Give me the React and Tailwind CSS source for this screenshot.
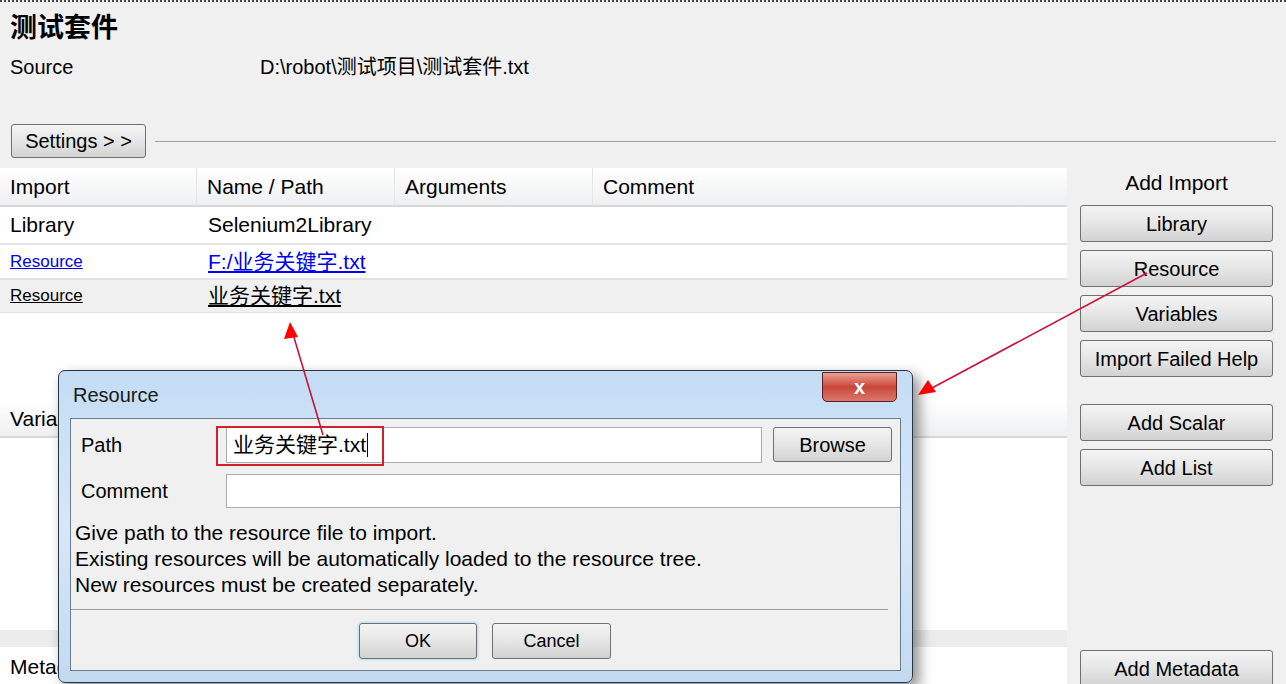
import React from 'react';

const font = { fontFamily: '"Liberation Sans", "Noto Sans CJK SC", sans-serif' };

const WinButton = ({ children, className = '' }) => (
  <button
    className={`flex items-center justify-center rounded-[3px] border border-[#707070] bg-gradient-to-b from-[#f4f4f4] via-[#e6e6e6] to-[#d2d2d2] text-black ${className}`}
  >
    {children}
  </button>
);

const GridHeader = ({ cols, h = 'h-[39px]' }) => (
  <div className={`flex ${h} border-b-2 border-[#d8d8d8] bg-gradient-to-b from-[#ffffff] to-[#eef0f2]`}>
    {cols.map((c, i) => (
      <div
        key={i}
        className={`flex items-center pl-[10px] text-[21px] ${i < cols.length - 1 ? 'border-r border-[#e6e6e6]' : ''}`}
        style={{ width: c.w }}
      >
        {c.label}
      </div>
    ))}
  </div>
);

const importCols = [
  { label: 'Import', w: 197 },
  { label: 'Name / Path', w: 198 },
  { label: 'Arguments', w: 198 },
  { label: 'Comment', w: 474 },
];

const rows = [
  { type: 'Library', name: 'Selenium2Library', link: false, h: 'h-[38px]', bg: 'bg-white', b: 'border-b-2' },
  { type: 'Resource', name: 'F:/业务关键字.txt', link: 'blue', h: 'h-[35px]', bg: 'bg-white', b: 'border-b-2' },
  { type: 'Resource', name: '业务关键字.txt', link: 'black', h: 'h-[33px]', bg: 'bg-[#f0f0f0]', b: 'border-b' },
];

export default function App() {
  return (
    <div className="relative h-[684px] w-[1286px] overflow-hidden bg-[#f0f0f0] text-black" style={font}>
      <div className="h-[4px] border-t-[2px] border-dotted border-[#444]" />
      <div className="flex h-[48px] items-center pl-[10px] text-[27px] font-bold">测试套件</div>
      <div className="flex h-[30px] items-center text-[20px]">
        <span className="w-[260px] pl-[10px]">Source</span>
        <span>D:\robot\测试项目\测试套件.txt</span>
      </div>
      <div className="h-[42px]" />
      <div className="flex h-[34px] items-center">
        <WinButton className="ml-[11px] h-[34px] w-[135px] text-[20px]">Settings &gt; &gt;</WinButton>
        <div className="ml-[9px] mr-[10px] h-px flex-1 bg-[#a0a0a0]" />
      </div>
      <div className="h-[10px]" />

      <div className="flex">
        <div className="w-[1067px]">
          <GridHeader cols={importCols} />
          {rows.map((r, i) => (
            <div key={i} className={`flex ${r.h} ${r.bg} ${r.b} border-[#e2e2e2] text-[21px]`}>
              <div className="flex w-[197px] items-center pl-[10px]">
                <span
                  className={
                    r.link === 'blue'
                      ? 'text-[17px] text-[#0000ee] underline'
                      : r.link === 'black'
                      ? 'text-[17px] underline'
                      : ''
                  }
                >
                  {r.type}
                </span>
              </div>
              <div className="flex items-center pl-[11px]">
                <span className={r.link === 'blue' ? 'text-[#0000ee] underline' : r.link === 'black' ? 'underline' : ''}>
                  {r.name}
                </span>
              </div>
            </div>
          ))}
          <div className="h-[88px] bg-white" />
          <GridHeader h="h-[37px]" cols={[{ label: 'Variable', w: 197 }, { label: 'Value', w: 198 }, { label: 'Comment', w: 672 }]} />
          <div className="h-[192px] bg-white" />
          <div className="h-[17px] bg-[#ececec]" />
          <div className="flex h-[40px] items-center bg-white pl-[10px] text-[21px]">Metadata</div>
        </div>

        <div className="flex w-[219px] flex-col pl-[13px] text-[20px]">
          <div className="flex h-[30px] w-[193px] items-center justify-center text-[21px]">Add Import</div>
          <div className="mt-[7px] flex flex-col gap-[8px]">
            <WinButton className="h-[37px] w-[193px]">Library</WinButton>
            <WinButton className="h-[37px] w-[193px]">Resource</WinButton>
            <WinButton className="h-[37px] w-[193px]">Variables</WinButton>
            <WinButton className="h-[37px] w-[193px]">Import Failed Help</WinButton>
          </div>
          <div className="mt-[27px] flex flex-col gap-[8px]">
            <WinButton className="h-[37px] w-[193px]">Add Scalar</WinButton>
            <WinButton className="h-[37px] w-[193px]">Add List</WinButton>
          </div>
          <WinButton className="mt-[164px] h-[37px] w-[193px]">Add Metadata</WinButton>
        </div>
      </div>

      {/* Resource dialog */}
      <div className="absolute left-[58px] top-[370px] flex h-[313px] w-[855px] flex-col rounded-[7px] border border-[#2b3440] bg-gradient-to-b from-[#c4ddf5] via-[#d6e7f8] to-[#c2daf0] px-[11px] pb-[11px] shadow-[6px_6px_14px_rgba(0,0,0,0.45)]">
        <div className="relative flex h-[47px] items-center pl-[3px] text-[20px] text-[#1a1a1a]">
          Resource
          <div className="absolute right-[4px] top-[1px] flex h-[30px] w-[75px] items-center justify-center rounded-b-[5px] border border-[#5a2020] bg-gradient-to-b from-[#e8a093] via-[#c8453a] to-[#d9786a]">
            <span className="text-[20px] font-bold leading-none text-white">x</span>
          </div>
        </div>
        <div className="flex flex-1 flex-col border border-[#6c7b8b] bg-[#f0f0f0]">
          <div className="mt-[7px] flex h-[37px] items-center">
            <span className="w-[155px] pl-[10px] text-[20px]">Path</span>
            <div className="relative flex h-[36px] w-[536px] items-center border border-[#abadb3] bg-white pl-[6px] text-[21px]">
              <span>业务关键字.txt</span>
              <span className="ml-[1px] h-[24px] w-px bg-black" />
              <div className="absolute left-[-11px] top-[-2px] h-[40px] w-[168px] border-2 border-[#d0202a]" />
            </div>
            <WinButton className="ml-[11px] h-[35px] w-[119px] text-[20px]">Browse</WinButton>
          </div>
          <div className="mt-[11px] flex h-[34px] items-center">
            <span className="w-[155px] pl-[10px] text-[20px]">Comment</span>
            <div className="h-[34px] flex-1 border border-[#abadb3] border-r-0 bg-white" />
          </div>
          <div className="mt-[12px] pl-[4px] text-[21px] leading-[26px]">
            <div>Give path to the resource file to import.</div>
            <div>Existing resources will be automatically loaded to the resource tree.</div>
            <div>New resources must be created separately.</div>
          </div>
          <div className="mr-[12px] mt-[11px] h-[2px] border-t border-[#a0a0a0] border-b-white" />
          <div className="mt-[12px] flex pl-[288px] text-[18px]">
            <WinButton className="h-[36px] w-[118px] border-[#3c7fb1] shadow-[0_0_3px_#6fc3ef]">OK</WinButton>
            <WinButton className="ml-[15px] h-[36px] w-[119px]">Cancel</WinButton>
          </div>
        </div>
      </div>

      {/* annotation arrows */}
      <svg className="pointer-events-none absolute left-0 top-0" width="1286" height="684">
        <line x1="1147" y1="273" x2="932" y2="388" stroke="#c8143c" strokeWidth="1.6" />
        <polygon points="918,395 928,380 936,392" fill="#ff0000" />
        <line x1="323" y1="435" x2="293" y2="334" stroke="#c8143c" strokeWidth="1.6" />
        <polygon points="290,322 284,339 298,337" fill="#ff0000" />
      </svg>
    </div>
  );
}
